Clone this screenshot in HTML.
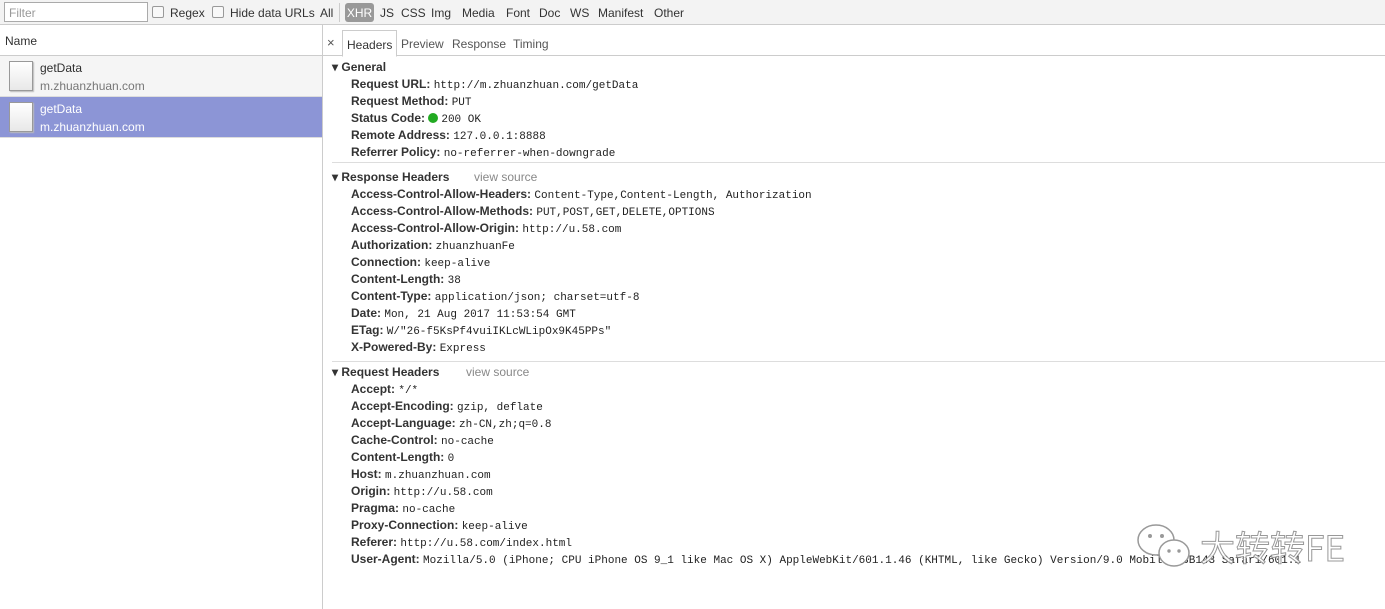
<!DOCTYPE html>
<html><head><meta charset="utf-8"><style>
*{box-sizing:border-box;margin:0;padding:0}
body{width:1385px;height:609px;overflow:hidden;background:#fff;font-family:"Liberation Sans",sans-serif;font-size:12px;color:#303030;position:relative}
.tb{position:absolute;left:0;top:0;width:1385px;height:25px;background:#f3f3f3;border-bottom:1px solid #ccc}
.tb span{position:absolute;top:6px;color:#333}
.filter{position:absolute;left:4px;top:2px;width:144px;height:20px;border:1px solid #aaa;background:#fff;color:#999;padding:3px 4px;font-size:12px}
.cb{position:absolute;top:6px;width:12px;height:12px;border:1px solid #999;background:#f8f8f8;border-radius:2px}
.xhr{position:absolute;left:345px;width:29px;height:19px;background:#999;border-radius:3px;color:#fff!important;text-align:center;top:3px!important;padding-top:3px}
.left{position:absolute;left:0;top:25px;width:323px;height:584px;border-right:1px solid #ccc}
.nh{height:31px;border-bottom:1px solid #ccc;padding:9px 5px;background:#fff}
.row{height:41px;position:relative;background:#f5f5f5;border-bottom:1px solid #ddd}
.row.sel{background:#8c95d6;color:#fff}
.ic{position:absolute;left:9px;top:5px;width:24px;height:30px;background:linear-gradient(#fff,#e8e8e8);border:1px solid #999;box-shadow:1px 1px 1px #bbb}
.row .a{position:absolute;left:40px;top:5px}
.row .b{position:absolute;left:40px;top:23px;color:#777}
.row.sel .b{color:#fff}
.tabs{position:absolute;left:323px;top:25px;width:1062px;height:31px;border-bottom:1px solid #ccc}
.tabs span{position:absolute;top:12px;color:#555}
.ht{position:absolute;left:19px;top:5px;width:55px;height:27px;border:1px solid #ccc;border-bottom:1px solid #fff;background:#fff;padding:7px 0 0 4px;color:#333}
.sec{position:absolute;left:332px;width:1053px}
.h{height:18px;line-height:18px;font-weight:bold;color:#333;white-space:nowrap;position:relative}
.h .vs{font-weight:normal;color:#888;position:absolute;top:0}
.i{height:17px;line-height:17px;padding-left:19px;white-space:nowrap}
.i b{font-weight:bold;color:#333}
.i m{font-family:"Liberation Mono",monospace;font-size:11px;color:#222}
.dot{display:inline-block;width:10px;height:10px;border-radius:50%;background:#2a2;vertical-align:-1px;margin-right:3px}
.sep{position:absolute;left:332px;width:1053px;height:1px;background:#ddd}
.wm{position:absolute;color:#fff;font-family:"Noto Sans CJK SC",sans-serif;font-size:35px;line-height:40px;-webkit-text-stroke:1px #888;opacity:.85}
</style></head><body>
<div class="tb">
<div class="filter">Filter</div>
<div class="cb" style="left:152px"></div><span style="left:170px">Regex</span>
<div class="cb" style="left:212px"></div><span style="left:230px">Hide data URLs</span>
<span style="left:320px">All</span>
<span style="left:339px;top:3px;height:19px;border-left:1px solid #ccc"></span>
<span class="xhr">XHR</span>
<span style="left:380px">JS</span><span style="left:401px">CSS</span><span style="left:431px">Img</span><span style="left:462px">Media</span><span style="left:506px">Font</span><span style="left:539px">Doc</span><span style="left:570px">WS</span><span style="left:598px">Manifest</span><span style="left:654px">Other</span>
</div>
<div class="left">
<div class="nh">Name</div>
<div class="row"><div class="ic"></div><div class="a">getData</div><div class="b">m.zhuanzhuan.com</div></div>
<div class="row sel"><div class="ic"></div><div class="a">getData</div><div class="b">m.zhuanzhuan.com</div></div>
</div>
<div class="tabs">
<span style="left:4px;top:10px;font-size:13px">×</span>
<div class="ht">Headers</div>
<span style="left:78px">Preview</span><span style="left:129px">Response</span><span style="left:190px">Timing</span>
</div>
<div class="sec" style="top:58px">
<div class="h">▾ General</div>
<div class="i"><b>Request URL:</b> <m>http://m.zhuanzhuan.com/getData</m></div>
<div class="i"><b>Request Method:</b> <m>PUT</m></div>
<div class="i"><b>Status Code:</b> <span class="dot"></span><m>200 OK</m></div>
<div class="i"><b>Remote Address:</b> <m>127.0.0.1:8888</m></div>
<div class="i"><b>Referrer Policy:</b> <m>no-referrer-when-downgrade</m></div>
</div>
<div class="sep" style="top:162px"></div>
<div class="sec" style="top:168px">
<div class="h">▾ Response Headers<span class="vs" style="left:142px">view source</span></div>
<div class="i"><b>Access-Control-Allow-Headers:</b> <m>Content-Type,Content-Length, Authorization</m></div>
<div class="i"><b>Access-Control-Allow-Methods:</b> <m>PUT,POST,GET,DELETE,OPTIONS</m></div>
<div class="i"><b>Access-Control-Allow-Origin:</b> <m>http://u.58.com</m></div>
<div class="i"><b>Authorization:</b> <m>zhuanzhuanFe</m></div>
<div class="i"><b>Connection:</b> <m>keep-alive</m></div>
<div class="i"><b>Content-Length:</b> <m>38</m></div>
<div class="i"><b>Content-Type:</b> <m>application/json; charset=utf-8</m></div>
<div class="i"><b>Date:</b> <m>Mon, 21 Aug 2017 11:53:54 GMT</m></div>
<div class="i"><b>ETag:</b> <m>W/"26-f5KsPf4vuiIKLcWLipOx9K45PPs"</m></div>
<div class="i"><b>X-Powered-By:</b> <m>Express</m></div>
</div>
<div class="sep" style="top:361px"></div>
<div class="sec" style="top:363px">
<div class="h">▾ Request Headers<span class="vs" style="left:134px">view source</span></div>
<div class="i"><b>Accept:</b> <m>*/*</m></div>
<div class="i"><b>Accept-Encoding:</b> <m>gzip, deflate</m></div>
<div class="i"><b>Accept-Language:</b> <m>zh-CN,zh;q=0.8</m></div>
<div class="i"><b>Cache-Control:</b> <m>no-cache</m></div>
<div class="i"><b>Content-Length:</b> <m>0</m></div>
<div class="i"><b>Host:</b> <m>m.zhuanzhuan.com</m></div>
<div class="i"><b>Origin:</b> <m>http://u.58.com</m></div>
<div class="i"><b>Pragma:</b> <m>no-cache</m></div>
<div class="i"><b>Proxy-Connection:</b> <m>keep-alive</m></div>
<div class="i"><b>Referer:</b> <m>http://u.58.com/index.html</m></div>
<div class="i"><b>User-Agent:</b> <m>Mozilla/5.0 (iPhone; CPU iPhone OS 9_1 like Mac OS X) AppleWebKit/601.1.46 (KHTML, like Gecko) Version/9.0 Mobile/13B143 Safari/601.1</m></div>
</div>
<svg style="position:absolute;left:1136px;top:520px" width="66" height="52"><ellipse cx="20" cy="20" rx="18" ry="15" fill="#fff" stroke="#999" stroke-width="1.5"/><ellipse cx="38" cy="33" rx="15" ry="13" fill="#fff" stroke="#999" stroke-width="1.5"/><circle cx="14" cy="16" r="2" fill="#999"/><circle cx="26" cy="16" r="2" fill="#999"/><circle cx="33" cy="31" r="1.7" fill="#999"/><circle cx="43" cy="31" r="1.7" fill="#999"/></svg>
<div class="wm" style="left:1200px;top:527px">大转转FE</div>
</body></html>
